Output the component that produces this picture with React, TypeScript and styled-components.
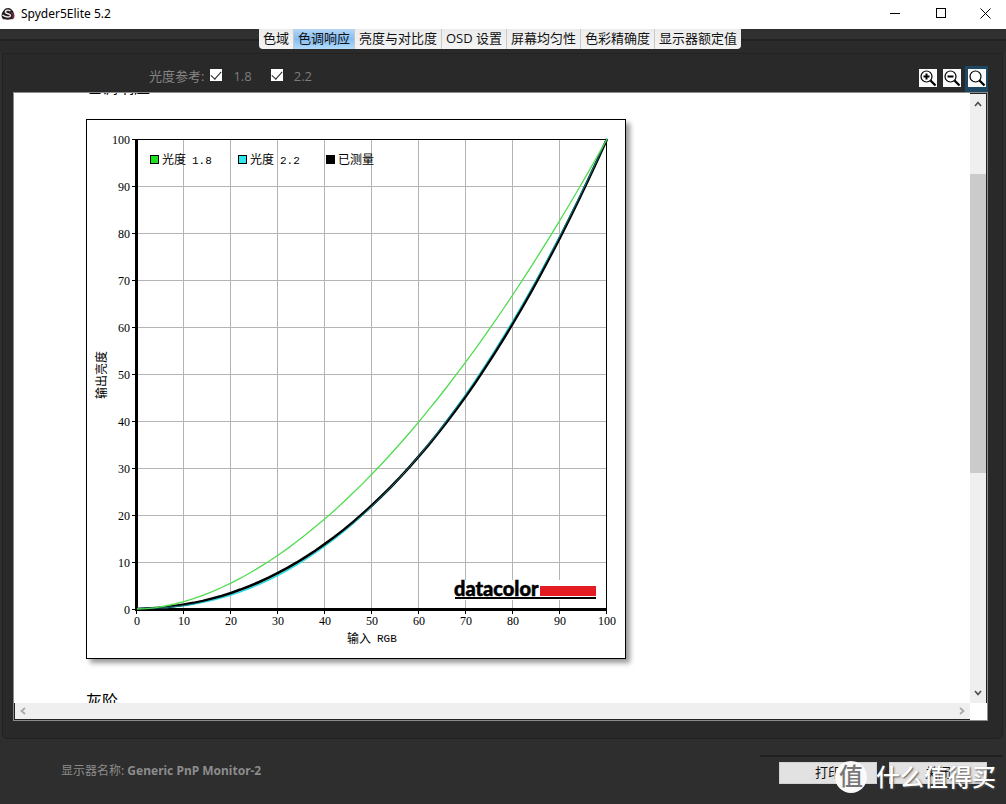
import React from "react";
import styled, { createGlobalStyle } from "styled-components";

const UI = '"Open Sans", "Noto Sans CJK SC", sans-serif';
const SONG = '"Liberation Mono", "Noto Sans CJK SC", monospace';

const Global = createGlobalStyle`
  * { box-sizing: border-box; }
  body { margin: 0; background: #2b2b2b; font-family: ${UI}; }
  button, input { font: inherit; margin: 0; }
`;

const Shell = styled.div`
  display: flex;
  flex-direction: column;
  height: 100vh;
  min-height: 320px;
  overflow: hidden;
  background: #2e2e2e;
`;

const TitleBar = styled.header`
  display: flex;
  align-items: center;
  flex: none;
  height: 29px;
  padding: 0 0 2px 1px;
  background: #fff;
  color: #000;
`;

const AppName = styled.h1`
  flex: 1;
  margin: 0 0 0 6px;
  font-family: "Noto Sans", sans-serif;
  font-size: 12px;
  font-weight: 400;
  line-height: 16px;
`;

const WindowButton = styled.button`
  display: flex;
  align-items: center;
  justify-content: center;
  width: 46px;
  height: 27px;
  padding: 0;
  border: 0;
  background: none;
  &:last-child { width: 42px; }
`;

const TabStrip = styled.nav`
  display: flex;
  justify-content: center;
  flex: none;
  height: 24px;
  padding-right: 6px;
  background: linear-gradient(#303030 0 10px, #222 10px 12px, #2a2a2a 12px);
`;

const TabGroup = styled.div`
  display: flex;
  height: 20px;
  overflow: hidden;
  border-radius: 0 0 4px 4px;
`;

const Tab = styled.button<{ $active?: boolean }>`
  height: 20px;
  padding: 0 4px 2px;
  border: 0;
  border-right: 1px solid #c9c9c9;
  background: ${(p) => (p.$active ? "linear-gradient(#b4d6f7, #86bdf2 50%, #b0dcfb)" : "linear-gradient(#ececec, #f4f4f4)")};
  color: #111;
  font-size: 13px;
  line-height: 18px;
  white-space: nowrap;
  &:last-child { border-right: 0; }
`;

const Panel = styled.main`
  display: flex;
  flex-direction: column;
  flex: 1;
  min-height: 0;
  margin: 0 3px 0 2px;
  padding: 0 14px 17px 10px;
  border: 1px solid #222;
  border-radius: 0 0 5px 5px;
  background: #292929;
`;

const Toolbar = styled.div`
  display: flex;
  align-items: center;
  flex: none;
  height: 38px;
  padding: 6px 0 0 136px;
  color: #858585;
  font-size: 13px;
  line-height: 18px;
`;

const Legend = styled.span`
  margin-right: 6px;
`;

const CheckLabel = styled.label`
  display: flex;
  align-items: center;
  gap: 11px;
  margin-right: 19px;
  color: #7c7c7c;
`;

const Check = styled.input`
  appearance: none;
  display: flex;
  justify-content: center;
  width: 12px;
  height: 12px;
  margin-bottom: 3px;
  background: #fff;
  &:checked::after {
    content: "";
    width: 5px;
    height: 9px;
    border: solid #222;
    border-width: 0 1px 1px 0;
    transform: rotate(42deg);
  }
`;

const ZoomGroup = styled.div`
  display: flex;
  align-items: center;
  align-self: flex-end;
  gap: 3px;
  margin-left: auto;
`;

const ZoomButton = styled.button<{ $active?: boolean }>`
  display: flex;
  width: 21px;
  height: 26px;
  padding: 3px 1px 5px 2px;
  border: 0;
  background: ${(p) => (p.$active ? "#1d4763" : "transparent")};
  ${(p) => p.$active && "width: 23px; padding-left: 3px;"}
`;

const Viewer = styled.div`
  display: grid;
  grid-template: minmax(0, 1fr) 17px / minmax(0, 1fr) 17px;
  flex: 1;
  min-height: 0;
  border: 1px solid #8c8c8c;
  background: #fff;
`;

const Page = styled.article`
  overflow: hidden;
  padding-left: 72px;
`;

const Heading = styled.h2`
  margin: 0;
  color: #000;
  font-size: 16px;
  font-weight: 400;
  line-height: 20px;
  &:first-child { margin-top: -16px; }
`;

const ChartCard = styled.figure`
  width: 540px;
  height: 540px;
  margin: 22px 0 32px;
  box-shadow: 4px 4px 5px rgba(0, 0, 0, 0.4);
  svg { display: block; }
`;

const VScroll = styled.div`
  display: flex;
  flex-direction: column;
  justify-content: space-between;
  align-items: center;
  padding: 6px 0;
  border-top: 1px solid #222;
  border-right: 1px solid #222;
  background: #efefef;
`;

const VTrack = styled.div`
  flex: 1;
  display: grid;
  grid-template-rows: 63fr 300fr 212fr;
  align-self: stretch;
  margin: 3px 0 4px;
`;

const VThumb = styled.div`
  grid-row: 2;
  background: #cbcbcb;
`;

const HScroll = styled.div`
  display: flex;
  justify-content: space-between;
  align-items: center;
  padding: 0 4px 1px;
  border-left: 1px solid #222;
  border-bottom: 1px solid #222;
  background: #efefef;
`;

const Footer = styled.footer`
  position: relative;
  display: flex;
  align-items: flex-start;
  justify-content: space-between;
  flex: none;
  height: 65px;
  padding: 16px 0 0 61px;
`;

const MonitorName = styled.p`
  margin: 7px 0 0;
  color: #8c8c8c;
  font-family: "Noto Sans", "Noto Sans CJK SC", sans-serif;
  font-size: 12px;
  line-height: 18px;
  strong { font-weight: 700; }
`;

const Actions = styled.div`
  display: flex;
  gap: 12px;
  padding: 5px 16px 0 19px;
  margin-right: 3px;
  border-top: 2px solid #202020;
`;

const ActionButton = styled.button`
  width: 98px;
  height: 22px;
  padding: 0 0 2px;
  border: 1px solid #d2d2d2;
  background: #e2e2e2;
  color: #111;
  font-size: 13px;
  line-height: 18px;
`;

const Watermark = styled.div`
  position: absolute;
  right: 10px;
  bottom: 11px;
  display: flex;
  align-items: center;
  gap: 9px;
  color: #fff;
  font-size: 24px;
  font-weight: 500;
  line-height: 32px;
  text-shadow: 1px 1px 2px #555;
  pointer-events: none;
`;

const Stamp = styled.span`
  width: 32px;
  height: 32px;
  border-radius: 50%;
  background: #fafafa;
  color: #777;
  font-size: 24px;
  font-weight: 500;
  line-height: 30px;
  text-align: center;
  text-shadow: none;
`;

const TABS = ["色域", "色调响应", "亮度与对比度", "OSD 设置", "屏幕均匀性", "色彩精确度", "显示器额定值"];
const STEPS = [0, 10, 20, 30, 40, 50, 60, 70, 80, 90, 100];
const SAMPLES = Array.from({ length: 51 }, (_, i) => i * 2);

// Plot area of the chart: origin and size of one axis unit.
const X0 = 51;
const Y0 = 490;
const UNIT = 4.7;

const curve = (fn: (v: number) => number) =>
  SAMPLES.map((v) => `${(X0 + v * UNIT).toFixed(1)},${(Y0 - fn(v) * UNIT).toFixed(1)}`).join(" ");

const gamma = (g: number) => (v: number) => 100 * Math.pow(v / 100, g);
const measured = (v: number) =>
  gamma(2.2)(v) + (v < 60 ? 0.6 * Math.sin((Math.PI * v) / 60) : -0.4 * Math.sin((Math.PI * (v - 60)) / 40));

const KEYS = [
  { name: "光度", value: "1.8", color: "#1fe01f" },
  { name: "光度", value: "2.2", color: "#2fe6ee" },
  { name: "已测量", value: "", color: "#000" },
];

function Chart() {
  return (
    <svg width="540" height="540" viewBox="0 0 540 540" role="img" aria-label="色调响应" fontFamily={SONG}>
      <rect x="0.5" y="0.5" width="539" height="539" fill="#fff" stroke="#000" />
      <g stroke="#b4b4b4" shapeRendering="crispEdges">
        {STEPS.slice(1, -1).map((s) => (
          <React.Fragment key={s}>
            <path d={`M${X0 + s * UNIT - 0.5} 20V490`} />
            <path d={`M51 ${Y0 - s * UNIT + 0.5}H520`} />
          </React.Fragment>
        ))}
      </g>
      <g stroke="#000" shapeRendering="crispEdges" fill="none">
        <path d="M51 20.5H520.5V490" />
        {STEPS.map((s) => (
          <path key={s} d={`M46 ${Y0 - s * UNIT + 0.5}H51M${X0 + s * UNIT - 0.5} 490V495`} />
        ))}
        <path d="M50.5 20V492M49 490.5H521" strokeWidth="3" />
      </g>
      <polyline points={curve((v) => gamma(2.2)(v) + 0.1)} fill="none" stroke="#2fe6ee" strokeWidth="1.6" />
      <polyline points={curve(measured)} fill="none" stroke="#000" strokeWidth="2.6" />
      <polyline points={curve((v) => gamma(2.2)(v) + 0.1)} fill="none" stroke="#2fc6ce" strokeWidth="0.6" />
      <polyline points={curve(gamma(1.8))} fill="none" stroke="#4fdc4f" strokeWidth="1.3" />
      <g fontSize="12" fontFamily="Liberation Serif, serif" fill="#000">
        {STEPS.map((s) => (
          <React.Fragment key={s}>
            <text x="44" y={Y0 - s * UNIT + 5} textAnchor="end">{s}</text>
            <text x={X0 + s * UNIT} y="506" textAnchor="middle">{s}</text>
          </React.Fragment>
        ))}
      </g>
      {KEYS.map((k, i) => (
        <g key={i} transform={`translate(${64 + i * 88} 36)`}>
          <rect x="0.5" y="0.5" width="8" height="8" fill={k.color} stroke="#000" shapeRendering="crispEdges" />
          <text x="12" y="9" fontSize="12">{k.name}</text>
          <text x="42" y="9" fontSize="11">{k.value}</text>
        </g>
      ))}
      <text x="261" y="524" fontSize="12">输入</text>
      <text x="291" y="523" fontSize="11">RGB</text>
      <text x="0" y="0" fontSize="12" textAnchor="middle" transform="translate(20 256) rotate(-90)">输出亮度</text>
      <rect x="368" y="461" width="143" height="20" fill="#fff" />
      <text x="368" y="477" fontSize="20" fontWeight="900" fontFamily="Lato, sans-serif" stroke="#000" strokeWidth="0.5">datacolor</text>
      <rect x="454" y="467" width="56" height="10" fill="#e31b23" />
      <rect x="369" y="478" width="141" height="2" fill="#000" />
    </svg>
  );
}

function AppIcon() {
  return (
    <svg width="14" height="14" viewBox="0 0 14 14" aria-hidden="true">
      <path d="M3 3C4 1 8 0 10 2C13 4 14 9 13 11C11 13 4 13 2 12C0 10 0 6 3 3Z" fill="#221c20" />
      <path d="M10 6C13 6 13 10 11 12" stroke="#8b2440" strokeWidth="1.500" fill="none" />
      <path d="M9.500 4C7.500 2.600 4.300 3 4.300 5C4.300 7.200 9.500 6.300 9.500 8.600C9.500 10.600 4.500 10.600 1.500 8" fill="none" stroke="#e8e8e8" strokeWidth="1.400" />
    </svg>
  );
}

function Magnifier({ kind }: { kind: "in" | "out" | "fit" }) {
  return (
    <svg width="18" height="18" viewBox="0 0 18 18" aria-hidden="true">
      <rect width="18" height="18" fill="#fbfbfb" />
      <circle cx="7.500" cy="7.500" r="5.500" fill="#fff" stroke="#000" strokeWidth="1.200" />
      <path d="M11.500 11.500L16.500 16.500" stroke="#000" strokeWidth="2.300" />
      {kind !== "fit" && <path d="M4.500 7.500H10.500" stroke="#000" strokeWidth="2" />}
      {kind === "in" && <path d="M7.500 4.500V10.500" stroke="#000" strokeWidth="2" />}
    </svg>
  );
}

function Arrow({ d, color }: { d: string; color: string }) {
  return (
    <svg width="8" height="8" viewBox="0 0 8 8" aria-hidden="true">
      <path d={d} fill="none" stroke={color} strokeWidth="1.700" />
    </svg>
  );
}

export default function App() {
  return (
    <Shell>
      <Global />
      <TitleBar>
        <AppIcon />
        <AppName>Spyder5Elite 5.2</AppName>
        <WindowButton aria-label="最小化">
          <svg width="11" height="11"><path d="M0 5.500H10" stroke="#000" /></svg>
        </WindowButton>
        <WindowButton aria-label="最大化">
          <svg width="11" height="11"><rect x="0.500" y="0.500" width="9" height="9" fill="none" stroke="#000" /></svg>
        </WindowButton>
        <WindowButton aria-label="关闭窗口">
          <svg width="11" height="11"><path d="M0.500 0.500L10.500 10.500M10.500 0.500L0.500 10.500" stroke="#000" /></svg>
        </WindowButton>
      </TitleBar>
      <TabStrip>
        <TabGroup>
          {TABS.map((t, i) => (
            <Tab key={t} $active={i === 1}>{t}</Tab>
          ))}
        </TabGroup>
      </TabStrip>
      <Panel>
        <Toolbar>
          <Legend>光度参考:</Legend>
          <CheckLabel><Check type="checkbox" defaultChecked />1.8</CheckLabel>
          <CheckLabel><Check type="checkbox" defaultChecked />2.2</CheckLabel>
          <ZoomGroup>
            <ZoomButton aria-label="放大"><Magnifier kind="in" /></ZoomButton>
            <ZoomButton aria-label="缩小"><Magnifier kind="out" /></ZoomButton>
            <ZoomButton aria-label="适合窗口" $active><Magnifier kind="fit" /></ZoomButton>
          </ZoomGroup>
        </Toolbar>
        <Viewer>
          <Page>
            <Heading>色调响应</Heading>
            <ChartCard><Chart /></ChartCard>
            <Heading>灰阶</Heading>
          </Page>
          <VScroll>
            <Arrow d="M1 6L4 2.500L7 6" color="#505050" />
            <VTrack><VThumb /></VTrack>
            <Arrow d="M1 2L4 5.500L7 2" color="#505050" />
          </VScroll>
          <HScroll>
            <Arrow d="M6 1L2.500 4L6 7" color="#a8a8a8" />
            <Arrow d="M2 1L5.500 4L2 7" color="#a8a8a8" />
          </HScroll>
        </Viewer>
      </Panel>
      <Footer>
        <MonitorName>显示器名称: <strong>Generic PnP Monitor-2</strong></MonitorName>
        <Actions>
          <ActionButton>打印</ActionButton>
          <ActionButton>关闭</ActionButton>
        </Actions>
        <Watermark><Stamp>值</Stamp>什么值得买</Watermark>
      </Footer>
    </Shell>
  );
}
